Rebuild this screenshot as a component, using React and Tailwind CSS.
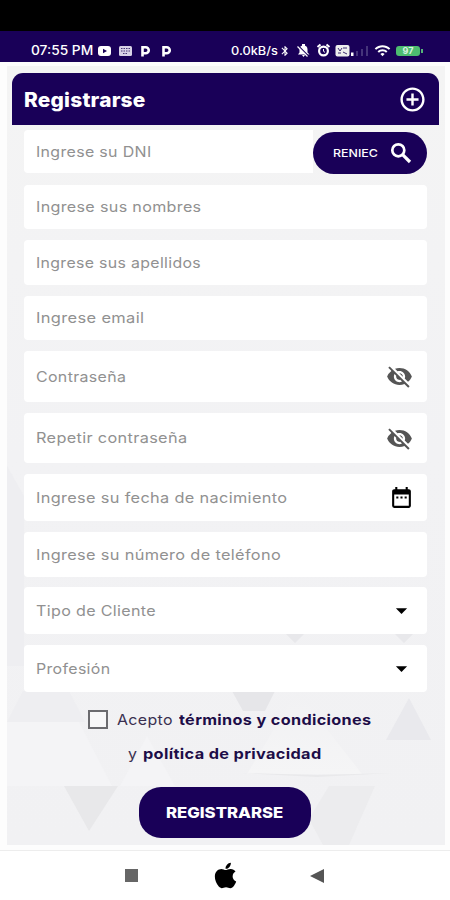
import React from "react";
import {
  MdVisibilityOff, MdAddCircleOutline, MdDateRange, MdArrowDropDown,
  MdWifi, MdBluetooth,
} from "react-icons/md";
import { FaApple } from "react-icons/fa";

const fields = [
  { label: "Ingrese sus nombres", box: "mt-3 h-11", text: "scale-x-[1.11]" },
  { label: "Ingrese sus apellidos", box: "mt-[11px] h-[45px]", text: "scale-x-[1.095]" },
  { label: "Ingrese email", box: "mt-[11px] h-11", text: "scale-x-[1.135]" },
  { label: "Contraseña", box: "mt-[11px] h-[51px]", text: "scale-x-[1.1]", icon: "eye" },
  { label: "Repetir contraseña", box: "mt-[11px] h-[50px]", text: "scale-x-[1.123]", icon: "eye" },
  { label: "Ingrese su fecha de nacimiento", box: "mt-[11px] h-[47px]", text: "scale-x-[1.125]", icon: "date" },
  { label: "Ingrese su número de teléfono", box: "mt-[11px] h-[45px]", text: "scale-x-[1.125]" },
  { label: "Tipo de Cliente", box: "mt-[10px] h-[47px]", text: "scale-x-[1.11]", icon: "drop" },
  { label: "Profesión", box: "mt-[11px] h-[47px]", text: "scale-x-[1.1]", icon: "drop" },
];

function FieldIcon({ name }) {
  if (name === "eye") return <MdVisibilityOff className="mr-[14px] size-[27px] text-[#555]" />;
  if (name === "date") return <MdDateRange className="mr-[13px] size-[25px] text-black" />;
  if (name === "drop") return <MdArrowDropDown className="mr-3 size-[27px] text-black" />;
  return null;
}

function Label({ className, children }) {
  return (
    <span className={`${className} origin-left text-[14.5px] leading-5 tracking-[0.3px] whitespace-nowrap text-[#919191]`}>
      {children}
    </span>
  );
}

function Field({ label, box, text, icon }) {
  return (
    <div className={`${box} flex items-center justify-between rounded-[4px] bg-white pl-3`}>
      <Label className={text}>{label}</Label>
      <FieldIcon name={icon} />
    </div>
  );
}

function Backdrop() {
  return (
    <svg className="absolute inset-0 h-full w-full" viewBox="0 0 438 779" preserveAspectRatio="none">
      <defs>
        <linearGradient id="panel" x1="0" y1="0" x2="0" y2="1">
          <stop offset="0" stopColor="#f4f4f4" />
          <stop offset="0.5" stopColor="#f2f2f4" />
          <stop offset="1" stopColor="#f1f1f3" />
        </linearGradient>
        <linearGradient id="fold" x1="0" y1="0" x2="0" y2="1">
          <stop offset="0" stopColor="#f1f1f3" />
          <stop offset="1" stopColor="#f5f5f6" />
        </linearGradient>
      </defs>
      <path fill="url(#panel)" d="M0 0H438V779H0Z" />
      <path fill="#eeeef1" d="M0 400L17 430V600H0Z" />
      <path fill="#f4f4f6" d="M0 656H72L105 720H0ZM113 720L140 670L168 720Z" />
      <path fill="url(#fold)" d="M240 708L290 625L355 708Z" />
      <path fill="#e8e8ea" d="M57 720H111L82 765Z" />
      <path fill="#e6e6e9" d="M225 625H268L258 645H236Z" />
      <path fill="#e9e9ed" d="M379 674H424L402 632Z" />
      <path fill="#ececee" d="M322 720H368L342 779H316L302 753Z" />
      <path fill="#eeeef1" d="M0 656L16 625H62L78 656Z" />
      <path fill="#e9e9eb" d="M235 707L310 709L385 707L310 711Z" />
      <path fill="#e8e8eb" d="M279 568H297L288 577ZM388 568H406L397 577Z" />
    </svg>
  );
}

function StatusBar() {
  return (
    <div className="flex h-[31px] items-center bg-[#190058] pt-2 pl-[31px] text-white">
      <span className="w-[66px] origin-left scale-x-[1.1] text-[12.5px] leading-4 font-medium whitespace-nowrap">07:55 PM</span>
      <svg className="h-4 w-[80px]" viewBox="0 0 80 16">
        <rect x="1" y="3" width="13" height="10" rx="3" fill="#fff" />
        <path d="M6 5.7v4.6L10 8z" fill="#190058" />
        <rect x="22" y="3" width="13" height="10" rx="1.5" fill="#d8d2e6" />
        <path d="M24 5.5h9M24 8h9M26 10.5h5" stroke="#463575" strokeWidth="1" strokeDasharray="1.5 1" />
        <path d="M45.5 13.5V4.2h3.2a3 3 0 0 1 0 6.1h-2M66.5 13.5V4.2h3.2a3 3 0 0 1 0 6.1h-2" fill="none" stroke="#fff" strokeWidth="2.6" />
      </svg>
      <span className="ml-[54px] w-[48px] origin-left scale-x-[1.11] text-[11.5px] leading-4 font-medium whitespace-nowrap">0.0kB/s</span>
      <MdBluetooth className="size-[12px]" />
      <svg className="ml-[5px] size-[15px]" viewBox="0 0 15 15">
        <path d="M2 11.5l1.5-2V6.5a4 4 0 0 1 8 0v3l2 2Z" fill="#fff" />
        <path d="M6 1h3v2H6ZM6 12h3l-1.5 2Z" fill="#fff" />
        <path d="M2.5 3l10 10" stroke="#190058" strokeWidth="1.2" />
        <path d="M1.5 3.5l10 10" stroke="#fff" strokeWidth="1.2" />
      </svg>
      <svg className="ml-[5px] size-[15px]" viewBox="0 0 15 15" fill="none" stroke="#fff">
        <circle cx="7.5" cy="8" r="4.4" strokeWidth="2.2" />
        <path d="M1.5 4l3-2.5M13.5 4l-3-2.5" strokeWidth="2" />
        <path d="M7.5 6v2.3l1.5 1" />
      </svg>
      <svg className="ml-1 h-4 w-[36px]" viewBox="0 0 36 16">
        <rect x="0.5" y="2" width="14" height="11.5" rx="2" fill="#eee" />
        <path d="M3 5l2 3 2-3M8 5h4M3 10h3M8 9l4 2" fill="none" stroke="#3d2b70" />
        <path d="M16 9.5h2.5V13H16Z" fill="#fff" />
        <path d="M21 8h2v5h-2ZM26 6h2v7h-2ZM31 3h2v10h-2Z" fill="#45347a" />
      </svg>
      <MdWifi className="ml-[3px] size-[17px]" />
      <div className="ml-[5px] flex h-[10px] w-[24px] items-center justify-center rounded-[3px] bg-[#4dbc70] text-[9px] leading-none font-bold text-[#d9f3e1]">97</div>
      <span className="ml-px h-1 w-0.5 bg-[#54b578]" />
    </div>
  );
}

export default function App() {
  return (
    <div className="flex h-[900px] w-[450px] flex-col overflow-hidden bg-[#fdfdfd] font-['Inter','Noto_Sans',sans-serif]">
      <div className="h-[31px] bg-black" />
      <StatusBar />
      <main className="relative mt-1 mr-[5px] ml-[7px] h-[779px] w-[438px] pt-[7px] pl-[5px]">
        <Backdrop />
        <div className="relative w-[427px]">
          <header className="flex h-[52px] items-center justify-between rounded-t-[11px] bg-[#190058] px-3 pt-px text-white">
            <h1 className="origin-left scale-x-[1.07] text-[19.5px] leading-6 font-extrabold tracking-[0.2px]">Registrarse</h1>
            <MdAddCircleOutline className="mb-px size-[29px]" />
          </header>
          <div className="px-3 pt-[5px]">
            <div className="flex h-[43px] justify-between">
              <div className="flex w-[289px] items-center rounded-l-[4px] bg-white pt-px pl-3">
                <Label className="scale-x-[1.1]">Ingrese su DNI</Label>
              </div>
              <button className="mt-[2px] flex h-[42px] w-[114px] items-center justify-between rounded-full bg-[#190058] pr-[15px] pl-5 text-white">
                <span className="origin-left scale-x-[1.13] text-[11px] font-medium">RENIEC</span>
                <svg className="size-[22px]" viewBox="0 0 22 22" fill="none" stroke="#fff">
                  <circle cx="8.3" cy="8.3" r="6" strokeWidth="2.7" />
                  <path d="M12.6 12.6L20 20" strokeWidth="3.2" />
                </svg>
              </button>
            </div>
            {fields.map((f) => <Field key={f.label} {...f} />)}
          </div>
          <div className="mt-[18px] flex h-5 items-center pl-[76px] text-[14.5px] whitespace-nowrap text-[#1d0d48]">
            <span className="mr-[9px] mb-px h-[19px] w-5 border-2 border-[#6b6b6f] bg-[#f7f7f8]" />
            <span className="w-[62px] origin-left scale-x-[1.1] tracking-[0.3px] text-[#3a3050]">Acepto</span>
            <b className="origin-left scale-x-[1.12] font-bold tracking-[0.3px]">términos y condiciones</b>
          </div>
          <div className="mt-[14px] flex h-5 items-center pl-[116px] text-[14.5px] whitespace-nowrap text-[#1d0d48]">
            <span className="w-[15px] origin-left scale-x-[1.1] text-[#3a3050]">y</span>
            <b className="origin-left scale-x-[1.125] font-bold tracking-[0.3px]">política de privacidad</b>
          </div>
          <button className="mt-[23px] ml-[127px] flex h-[51px] w-[172px] items-center justify-center rounded-[22px] bg-[#190058] pt-px text-white">
            <span className="scale-x-[1.115] text-[15px] font-extrabold">REGISTRARSE</span>
          </button>
        </div>
      </main>
      <nav className="mt-[5px] flex h-[50px] items-center border-t border-[#ededed] bg-white pl-[125px]">
        <span className="size-[13px] bg-[#666]" />
        <FaApple className="ml-[73px] size-[29px] text-black" />
        <svg className="ml-[70px] h-[14px] w-[14px]" viewBox="0 0 14 14"><path d="M0 7L14 0V14Z" fill="#555" /></svg>
      </nav>
    </div>
  );
}
